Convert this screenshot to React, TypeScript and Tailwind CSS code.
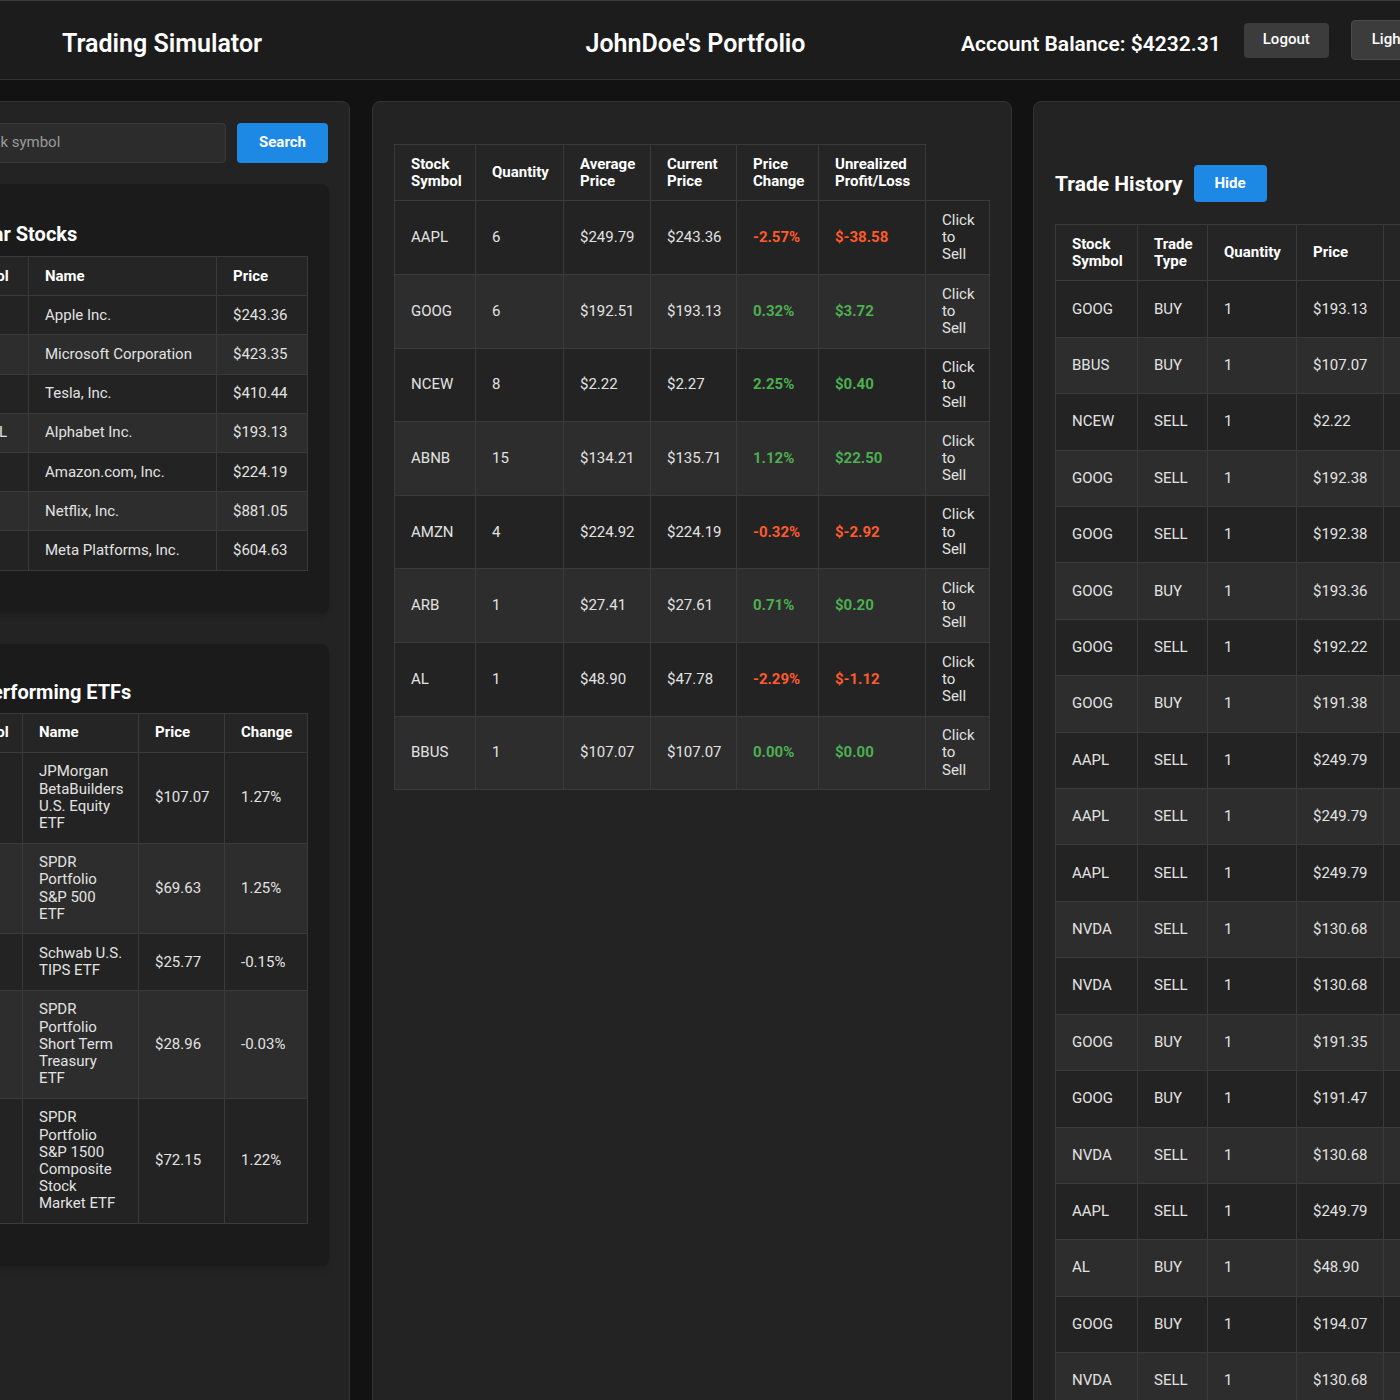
import React from "react"

const popularStocks = [
  { symbol: "AAPL", name: "Apple Inc.", price: "$243.36" },
  { symbol: "MSFT", name: "Microsoft Corporation", price: "$423.35" },
  { symbol: "TSLA", name: "Tesla, Inc.", price: "$410.44" },
  { symbol: "GOOGL", name: "Alphabet Inc.", price: "$193.13" },
  { symbol: "AMZN", name: "Amazon.com, Inc.", price: "$224.19" },
  { symbol: "NFLX", name: "Netflix, Inc.", price: "$881.05" },
  { symbol: "META", name: "Meta Platforms, Inc.", price: "$604.63" },
]

const etfs = [
  { symbol: "BBUS", name: "JPMorgan BetaBuilders U.S. Equity ETF", price: "$107.07", change: "1.27%" },
  { symbol: "SPLG", name: "SPDR Portfolio S&P 500 ETF", price: "$69.63", change: "1.25%" },
  { symbol: "SCHP", name: "Schwab U.S. TIPS ETF", price: "$25.77", change: "-0.15%" },
  { symbol: "SPTS", name: "SPDR Portfolio Short Term Treasury ETF", price: "$28.96", change: "-0.03%" },
  { symbol: "SPTM", name: "SPDR Portfolio S&P 1500 Composite Stock Market ETF", price: "$72.15", change: "1.22%" },
]

const holdings = [
  { symbol: "AAPL", qty: "6", avg: "$249.79", cur: "$243.36", change: "-2.57%", pl: "$-38.58", up: false },
  { symbol: "GOOG", qty: "6", avg: "$192.51", cur: "$193.13", change: "0.32%", pl: "$3.72", up: true },
  { symbol: "NCEW", qty: "8", avg: "$2.22", cur: "$2.27", change: "2.25%", pl: "$0.40", up: true },
  { symbol: "ABNB", qty: "15", avg: "$134.21", cur: "$135.71", change: "1.12%", pl: "$22.50", up: true },
  { symbol: "AMZN", qty: "4", avg: "$224.92", cur: "$224.19", change: "-0.32%", pl: "$-2.92", up: false },
  { symbol: "ARB", qty: "1", avg: "$27.41", cur: "$27.61", change: "0.71%", pl: "$0.20", up: true },
  { symbol: "AL", qty: "1", avg: "$48.90", cur: "$47.78", change: "-2.29%", pl: "$-1.12", up: false },
  { symbol: "BBUS", qty: "1", avg: "$107.07", cur: "$107.07", change: "0.00%", pl: "$0.00", up: true },
]

const trades: [string, string, string][] = [
  ["GOOG", "BUY", "$193.13"],
  ["BBUS", "BUY", "$107.07"],
  ["NCEW", "SELL", "$2.22"],
  ["GOOG", "SELL", "$192.38"],
  ["GOOG", "SELL", "$192.38"],
  ["GOOG", "BUY", "$193.36"],
  ["GOOG", "SELL", "$192.22"],
  ["GOOG", "BUY", "$191.38"],
  ["AAPL", "SELL", "$249.79"],
  ["AAPL", "SELL", "$249.79"],
  ["AAPL", "SELL", "$249.79"],
  ["NVDA", "SELL", "$130.68"],
  ["NVDA", "SELL", "$130.68"],
  ["GOOG", "BUY", "$191.35"],
  ["GOOG", "BUY", "$191.47"],
  ["NVDA", "SELL", "$130.68"],
  ["AAPL", "SELL", "$249.79"],
  ["AL", "BUY", "$48.90"],
  ["GOOG", "BUY", "$194.07"],
  ["NVDA", "SELL", "$130.68"],
  ["GOOG", "BUY", "$193.13"],
]

const th = "border border-[#3a3a3a] bg-[#252525] px-4 py-[10.5px] text-left align-middle font-bold text-white"
const cell = "border border-[#3a3a3a] px-4 py-[10.5px] align-middle"
const td = `${cell} text-[#e2e2e2]`
const rowBg = (i: number) => (i % 2 === 0 ? "bg-[#232323]" : "bg-[#2d2d2d]")

export default function App() {
  return (
    <div className="min-h-screen w-[1400px] overflow-hidden bg-[#121212] text-[15px] leading-[17.2px] text-[#e2e2e2] [font-family:Roboto,sans-serif]">
      {/* Top bar */}
      <header className="flex h-[80px] items-center whitespace-nowrap border-t border-b border-t-[#3c3c3c] border-b-[#333] bg-[#1c1c1c]">
        <div className="w-[480px] shrink-0 pl-[62px] pt-[7px] text-[25px] leading-[30px] font-semibold text-white">Trading Simulator</div>
        <div className="w-[431px] shrink-0 pt-[7px] text-center text-[25px] leading-[30px] font-semibold text-white">JohnDoe's Portfolio</div>
        <div className="flex shrink-0 items-center pl-[50px]">
          <span className="pt-[7px] text-[21px] leading-[26px] font-semibold text-white">Account Balance: $4232.31</span>
          <button className="ml-[23px] h-[35px] w-[85px] rounded-[4px] bg-[#3c3c3c] text-[15px] font-medium text-white">Logout</button>
          <button className="ml-[22px] h-[40px] rounded-[4px] border border-[#4a4a4a] bg-[#3c3c3c] px-5 text-[15px] font-medium text-white">Light Mode</button>
        </div>
      </header>

      {/* Panels */}
      <main className="ml-[-101px] flex items-stretch pt-[21px]">
        {/* Left: search + market lists */}
        <section className="w-[451px] shrink-0 rounded-lg border border-[#333] bg-[#232323] p-5 pt-[21px]">
          <div className="flex h-[40px] gap-[11px]">
            <input
              placeholder="Enter stock symbol"
              className="w-[306px] rounded-[4px] border border-[#3a3a3a] bg-[#2c2c2c] px-3 text-[15px] text-white placeholder:text-[#9a9a9a]"
            />
            <button className="w-[91px] rounded-[4px] bg-[#1e88e5] text-[15px] font-bold text-white">Search</button>
          </div>

          <div className="mt-[21px] rounded-lg bg-[#1b1b1b] p-[21px] shadow-md">
            <h2 className="mt-[15px] mb-[8px] text-[20px] leading-[28px] font-bold text-white">Popular Stocks</h2>
            <table className="mb-[21px] w-full table-fixed border-collapse">
              <colgroup>
                <col className="w-[87px]" />
                <col className="w-[188px]" />
                <col />
              </colgroup>
              <thead>
                <tr>
                  <th className={th}>Symbol</th>
                  <th className={th}>Name</th>
                  <th className={th}>Price</th>
                </tr>
              </thead>
              <tbody>
                {popularStocks.map((s, i) => (
                  <tr key={s.symbol} className={rowBg(i)}>
                    <td className={td}>{s.symbol}</td>
                    <td className={td}>{s.name}</td>
                    <td className={td}>{s.price}</td>
                  </tr>
                ))}
              </tbody>
            </table>
          </div>

          <div className="mt-[31px] rounded-lg bg-[#1b1b1b] p-[21px] shadow-md">
            <h2 className="mt-[13px] mb-[7px] text-[20px] leading-[28px] font-bold text-white">Top Performing ETFs</h2>
            <table className="mb-[21px] w-full table-fixed border-collapse">
              <colgroup>
                <col className="w-[81px]" />
                <col className="w-[116px]" />
                <col className="w-[86px]" />
                <col />
              </colgroup>
              <thead>
                <tr>
                  <th className={th}>Symbol</th>
                  <th className={th}>Name</th>
                  <th className={th}>Price</th>
                  <th className={th}>Change</th>
                </tr>
              </thead>
              <tbody>
                {etfs.map((e, i) => (
                  <tr key={e.symbol} className={rowBg(i)}>
                    <td className={td}>{e.symbol}</td>
                    <td className={`${td} pr-[14px]`}>{e.name}</td>
                    <td className={td}>{e.price}</td>
                    <td className={td}>{e.change}</td>
                  </tr>
                ))}
              </tbody>
            </table>
          </div>
        </section>

        {/* Center: holdings */}
        <section className="ml-[22px] w-[640px] shrink-0 rounded-lg border border-[#333] bg-[#232323] p-[21px]">
          <table className="mt-[21px] w-full table-fixed border-collapse">
            <colgroup>
              <col className="w-[81px]" />
              <col className="w-[88px]" />
              <col className="w-[87px]" />
              <col className="w-[86px]" />
              <col className="w-[82px]" />
              <col className="w-[107px]" />
              <col />
            </colgroup>
            <thead>
              <tr>
                <th className={th}>Stock Symbol</th>
                <th className={th}>Quantity</th>
                <th className={th}>Average Price</th>
                <th className={th}>Current Price</th>
                <th className={th}>Price Change</th>
                <th className={th}>Unrealized Profit/Loss</th>
              </tr>
            </thead>
            <tbody>
              {holdings.map((h, i) => {
                const tone = h.up ? "font-bold text-[#4caf50]" : "font-bold text-[#ff5a2c]"
                return (
                  <tr key={h.symbol} className={rowBg(i)}>
                    <td className={td}>{h.symbol}</td>
                    <td className={td}>{h.qty}</td>
                    <td className={td}>{h.avg}</td>
                    <td className={td}>{h.cur}</td>
                    <td className={`${cell} ${tone}`}>{h.change}</td>
                    <td className={`${cell} ${tone}`}>{h.pl}</td>
                    <td className={`${td} cursor-pointer`}>Click to Sell</td>
                  </tr>
                )
              })}
            </tbody>
          </table>
        </section>

        {/* Right: trade history */}
        <section className="ml-[21px] w-[600px] shrink-0 rounded-lg border border-[#333] bg-[#232323] p-[21px]">
          <div className="mt-[42px] mb-[22px] flex items-center gap-[11px]">
            <h2 className="text-[21px] leading-[28px] font-bold text-white">Trade History</h2>
            <button className="h-[37px] w-[73px] rounded-[4px] bg-[#1e88e5] text-[15px] font-bold text-white">Hide</button>
          </div>
          <table className="w-[548px] table-fixed border-collapse">
            <colgroup>
              <col className="w-[82px]" />
              <col className="w-[70px]" />
              <col className="w-[89px]" />
              <col className="w-[87px]" />
              <col className="w-[120px]" />
              <col className="w-[100px]" />
            </colgroup>
            <thead>
              <tr>
                <th className={th}>Stock Symbol</th>
                <th className={th}>Trade Type</th>
                <th className={th}>Quantity</th>
                <th className={th}>Price</th>
                <th className={th}>Total Value</th>
                <th className={th}>Date</th>
              </tr>
            </thead>
            <tbody>
              {trades.map(([sym, type, price], i) => (
                <tr key={i} className={rowBg(i)}>
                  <td className={td}>{sym}</td>
                  <td className={td}>{type}</td>
                  <td className={td}>1</td>
                  <td className={td}>{price}</td>
                  <td className={td}>{price}<br />total</td>
                  <td className={td}>1/15/2025</td>
                </tr>
              ))}
            </tbody>
          </table>
        </section>
      </main>
    </div>
  )
}
